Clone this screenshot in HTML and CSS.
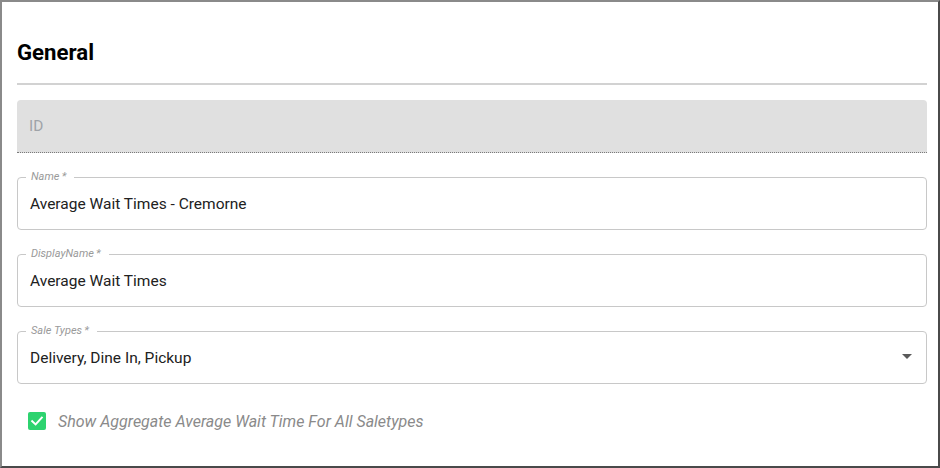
FILE: index.html
```html
<!DOCTYPE html>
<html lang="en">
<head>
<meta charset="utf-8">
<title>General</title>
<link rel="stylesheet" href="styles.css">
</head>
<body>
<div class="frame">
  <h2 class="title">General</h2>
  <div class="divider"></div>
  <div class="filled">
    <span class="placeholder">ID</span>
  </div>
  <div class="field">
    <span class="label">Name&thinsp;*</span>
    <span class="value">Average Wait Times - Cremorne</span>
  </div>
  <div class="field">
    <span class="label">DisplayName&thinsp;*</span>
    <span class="value">Average Wait Times</span>
  </div>
  <div class="field select">
    <span class="label">Sale Types&thinsp;*</span>
    <span class="value">Delivery, Dine In, Pickup</span>
    <svg class="arrow" width="10" height="5" viewBox="0 0 10 5"><polygon points="0,0 10,0 5,5" fill="#5a5a5a"/></svg>
  </div>
  <label class="check-row">
    <span class="checkbox">
      <svg width="18" height="18" viewBox="0 0 18 18"><path d="M4.2 9.2 L7.6 12.4 L13.8 5.6" fill="none" stroke="#fff" stroke-width="2" stroke-linecap="square"/></svg>
    </span>
    <span class="check-label">Show Aggregate Average Wait Time For All Saletypes</span>
  </label>
</div>
</body>
</html>
```

FILE: styles.css
```css
html, body {
  margin: 0;
  padding: 0;
  background: #fff;
}

.frame {
  box-sizing: border-box;
  width: 940px;
  height: 468px;
  border: 2px solid;
  border-color: #8a8a8a #4a4a4a #4a4a4a #8a8a8a;
  padding: 37px 11px 0 15px;
  font-family: Roboto, "Liberation Sans", sans-serif;
  display: flex;
  flex-direction: column;
}

.title {
  margin: 0;
  font-size: 22.2px;
  line-height: 26px;
  font-weight: 700;
  color: #000;
}

.divider {
  height: 2px;
  background: #d2d2d2;
  margin-top: 18px;
}

.filled {
  margin-top: 15px;
  box-sizing: border-box;
  height: 53px;
  background: #e0e0e0;
  border-radius: 4px 4px 0 0;
  border-bottom: 1px dotted #7a7a7a;
  display: flex;
  align-items: center;
  padding: 0 12px;
}

.placeholder {
  font-size: 15.4px;
  color: #9fa3a8;
}

.field {
  position: relative;
  margin-top: 24px;
  box-sizing: border-box;
  height: 53px;
  border: 1px solid #c8c8c8;
  border-radius: 4px;
  display: flex;
  align-items: center;
  padding: 0 14px 0 12px;
}

.label {
  position: absolute;
  left: 8px;
  top: -8px;
  line-height: 14px;
  padding: 0 8px 0 5px;
  background: #fff;
  font-size: 11px;
  font-style: italic;
  color: #9a9a9a;
}

.value {
  font-size: 15.5px;
  color: #212121;
}

.arrow {
  margin-left: auto;
  margin-top: -2px;
  display: block;
}

.check-row {
  margin-top: 28px;
  display: flex;
  align-items: center;
  padding-left: 11px;
  height: 18px;
}

.checkbox {
  width: 18px;
  height: 18px;
  background: #2dd36f;
  border-radius: 2px;
  display: block;
}

.checkbox svg {
  display: block;
}

.check-label {
  margin-left: 12px;
  font-size: 16px;
  font-style: italic;
  color: #8a8a8a;
}
```
